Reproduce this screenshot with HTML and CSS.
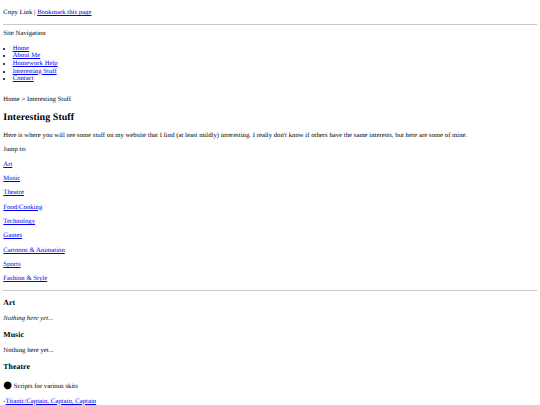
FILE: index.html
```html
<!DOCTYPE html>
<html lang="en">
<head>
<meta charset="utf-8">
<title>Interesting Stuff</title>
<link rel="stylesheet" href="styles.css">
</head>
<body class="page">
<p class="share">Copy Link | <a href="#">Bookmark this page</a></p>
<hr class="rule">
<nav class="site-nav">
  <p class="nav-title">Site Navigation</p>
  <ul class="nav-list">
    <li><a href="#">Home</a></li>
    <li><a href="#">About Me</a></li>
    <li><a href="#">Homework Help</a></li>
    <li><a href="#">Interesting Stuff</a></li>
    <li><a href="#">Contact</a></li>
  </ul>
</nav>
<p class="crumbs">Home &gt; Interesting Stuff</p>
<h2 class="title">Interesting Stuff</h2>
<p>Here is where you will see some stuff on my website that I find (at least mildly) interesting. I really don't know if others have the same interests, but here are some of mine.</p>
<p>Jump to:</p>
<p><a href="#art">Art</a></p>
<p><a href="#music">Music</a></p>
<p><a href="#theatre">Theatre</a></p>
<p><a href="#food">Food/Cooking</a></p>
<p><a href="#tech">Technology</a></p>
<p><a href="#games">Games</a></p>
<p><a href="#cartoons">Cartoons &amp; Animation</a></p>
<p><a href="#sports">Sports</a></p>
<p><a href="#fashion">Fashion &amp; Style</a></p>
<hr class="rule">
<h3 id="art" class="section">Art</h3>
<p><em>Nothing here yet...</em></p>
<h3 id="music" class="section">Music</h3>
<p>Nothing here yet...</p>
<h3 id="theatre" class="section">Theatre</h3>
<p class="bullet-line"><span class="big-dot">●</span> Scripts for various skits</p>
<p>-<a href="#">Titanic/Captain, Captain, Captain</a></p>
</body>
</html>
```

FILE: styles.css
```css
html {
  font-size: 6.6667px;
}

.page {
  margin: 0.5em;
  font-family: "Liberation Serif", "Times New Roman", serif;
  font-size: 1rem;
  line-height: 1.15;
  letter-spacing: 0.04px;
  color: #000;
  background: #fff;
  text-rendering: geometricPrecision;
}

a {
  color: #0000ee;
}

p {
  margin: 1em 0;
}

.share {
  margin-top: 0.9em;
}

.rule {
  margin: 0.5em 0;
  border: 0;
  border-top: 1px solid #c8c8c8;
  height: 0;
}

.nav-title {
  margin-top: 0.85em;
}

.nav-list {
  margin: 1em 0;
  padding: 0 0 0 1.4em;
  list-style: disc outside;
}

.crumbs {
  margin-top: 2em;
}

.title {
  font-size: 1.5em;
  margin: 0.83em 0;
}

.section {
  font-size: 1.17em;
  margin: 1em 0;
}

.big-dot {
  font-family: "DejaVu Sans", sans-serif;
  font-size: 1.5em;
}
```
